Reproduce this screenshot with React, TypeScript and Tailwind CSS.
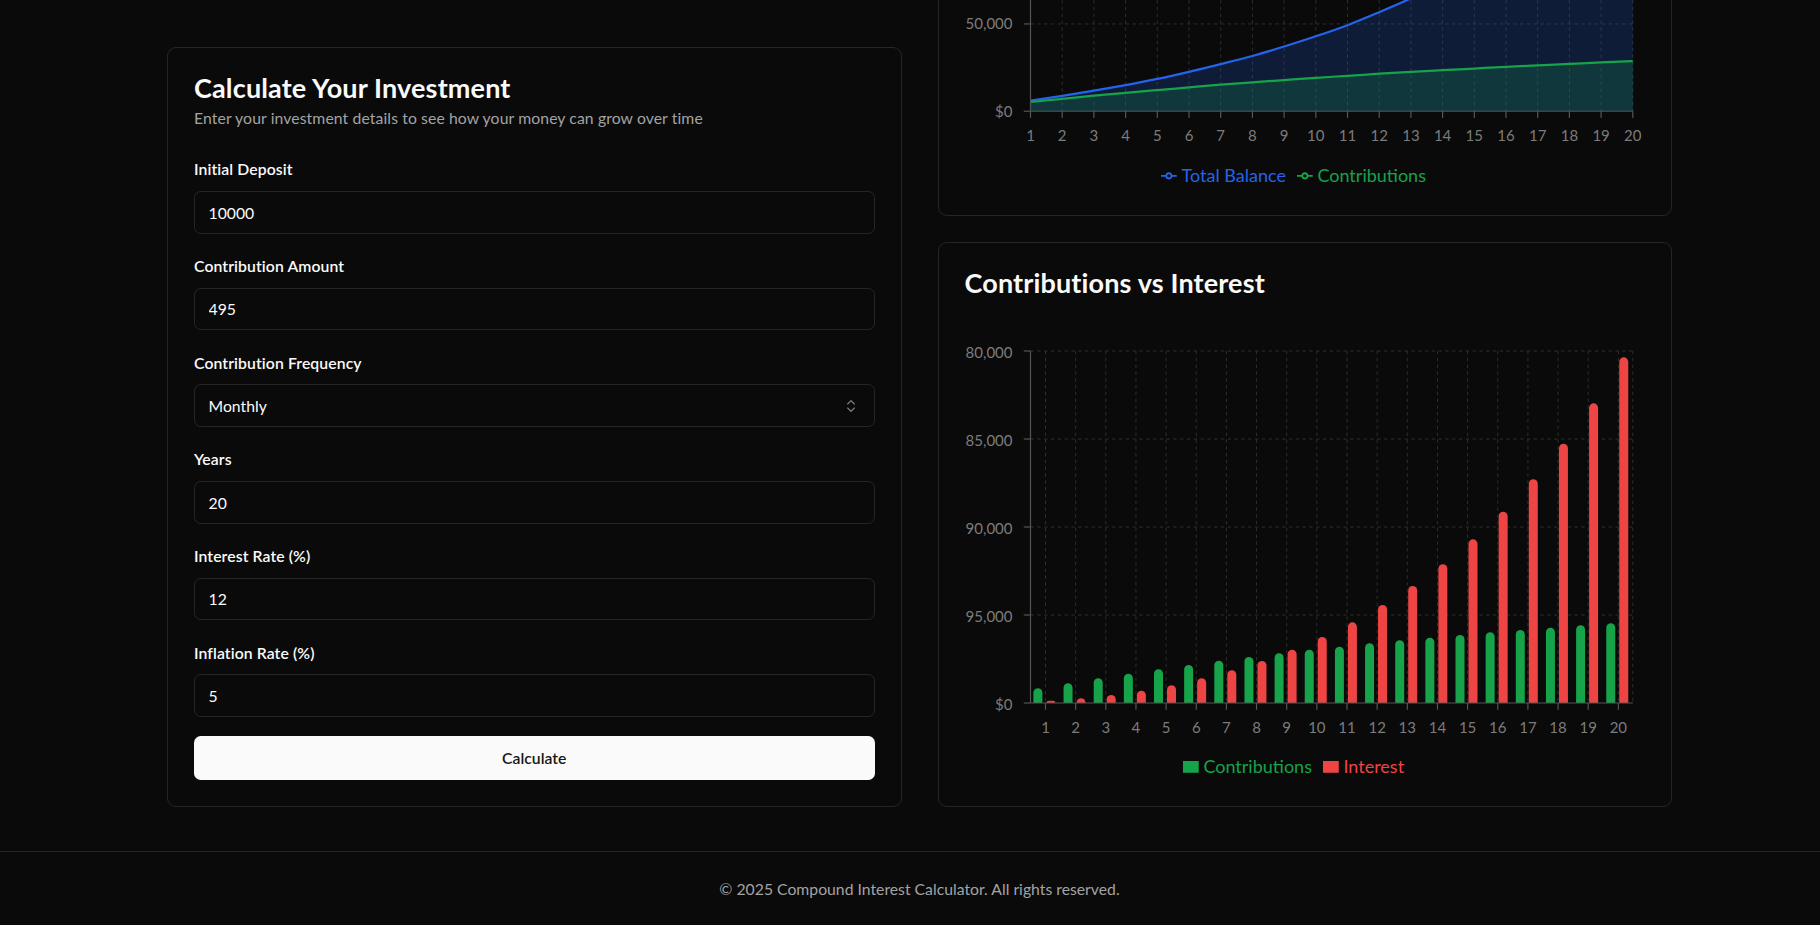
import { ChevronsUpDown } from "lucide-react";

// values read off the reference charts (year 1..20)
const contributions = [
  15870, 21270, 26660, 31630, 36380, 41020, 45660, 49660, 53650, 57540,
  60780, 64450, 67680, 70490, 73410, 76320, 78800, 81290, 83880, 86040,
];
const interest = [
  2480, 5070, 8640, 13280, 19110, 26660, 35300, 45340, 57540, 71250,
  87110, 105790, 126300, 149730, 176710, 206510, 241490, 279910, 323530, 373180,
];
const totals = contributions.map((c, i) => c + interest[i]);
const years = contributions.map((_, i) => i + 1);

const GRID = "#2e2e2e";
const AXIS = "#555555";
const TICK = "#7c7c7c";
const BLUE = "#2563eb";
const GREEN = "#16a34a";
const RED = "#ef4444";

// monotone-x curve, same idea as d3/recharts "monotone"
function monotonePath(pts: [number, number][]) {
  const n = pts.length;
  const h: number[] = [];
  const s: number[] = [];
  for (let i = 0; i < n - 1; i++) {
    h[i] = pts[i + 1][0] - pts[i][0];
    s[i] = (pts[i + 1][1] - pts[i][1]) / h[i];
  }
  const m: number[] = new Array(n).fill(0);
  for (let i = 1; i < n - 1; i++) {
    const p = (s[i - 1] * h[i] + s[i] * h[i - 1]) / (h[i - 1] + h[i]);
    m[i] =
      (Math.sign(s[i - 1]) + Math.sign(s[i])) *
        Math.min(Math.abs(s[i - 1]), Math.abs(s[i]), 0.5 * Math.abs(p)) || 0;
  }
  m[0] = (3 * s[0] - m[1]) / 2;
  m[n - 1] = (3 * s[n - 2] - m[n - 2]) / 2;
  let d = `M${pts[0][0]},${pts[0][1]}`;
  for (let i = 0; i < n - 1; i++) {
    const [x0, y0] = pts[i];
    const [x1, y1] = pts[i + 1];
    const t = h[i] / 3;
    d += `C${x0 + t},${y0 + m[i] * t},${x1 - t},${y1 - m[i + 1] * t},${x1},${y1}`;
  }
  return d;
}

function Field({ label, value }: { label: string; value: string }) {
  return (
    <div>
      <label className="block h-[22px] text-[15.75px] font-semibold leading-[22px] tracking-[0.1px] text-[#fafafa]">
        {label}
      </label>
      <input
        defaultValue={value}
        className="mt-[10.7px] block h-[42.7px] w-full rounded-[6.75px] border border-[#262626] bg-transparent px-[13.5px] text-[15.75px] text-[#fafafa] outline-none"
      />
    </div>
  );
}

function SelectField({ label, value }: { label: string; value: string }) {
  return (
    <div>
      <label className="block h-[22px] text-[15.75px] font-semibold leading-[22px] tracking-[0.1px] text-[#fafafa]">
        {label}
      </label>
      <div className="mt-[10.7px] flex h-[42.7px] w-full items-center justify-between rounded-[6.75px] border border-[#262626] pl-[13.5px] pr-[14.5px] text-[15.75px] text-[#fafafa]">
        <span>{value}</span>
        <ChevronsUpDown className="h-[16px] w-[16px] opacity-50" strokeWidth={1.75} />
      </div>
    </div>
  );
}

type LegendItem = { label: string; color: string; kind: "line" | "rect" };

function Legend({ items }: { items: LegendItem[] }) {
  return (
    <div className="flex h-[25.5px] items-center justify-center pr-[11px]">
      {items.map((it) => (
        <div key={it.label} className="mr-[11.25px] flex items-center">
          <svg width="15.75" height="15.75" viewBox="0 0 32 32" className="mr-[4.5px]">
            {it.kind === "line" ? (
              <path
                strokeWidth={4}
                fill="none"
                stroke={it.color}
                d="M0,16h10.67A5.33,5.33,0,1,1,21.33,16H32M21.33,16A5.33,5.33,0,1,1,10.67,16"
              />
            ) : (
              <path fill={it.color} d="M0,4h32v24h-32z" />
            )}
          </svg>
          <span className="text-[18px] leading-[25px]" style={{ color: it.color }}>
            {it.label}
          </span>
        </div>
      ))}
    </div>
  );
}

function GrowthChart() {
  const base = 110.5;
  const step = 87.3; // px per 150,000
  const x = (i: number) => 1030 + i * 31.7;
  const y = (v: number) => base - (v * step) / 150000;
  const top = base - 4 * step;
  const right = x(19);
  const totalPts = totals.map((v, i) => [x(i), y(v)] as [number, number]);
  const contribPts = contributions.map((v, i) => [x(i), y(v)] as [number, number]);
  const totalLine = monotonePath(totalPts);
  const contribLine = monotonePath(contribPts);
  const close = `L${right},${base}L${x(0)},${base}Z`;
  const yTicks = ["$0", "50,000"];

  return (
    <svg
      width="680.5"
      height="431"
      viewBox="964.5 -268.75 680.5 431"
      className="block overflow-hidden"
    >
      {[1, 2, 3, 4].map((k) => (
        <line key={k} x1={1030} x2={right} y1={base - k * step} y2={base - k * step} stroke={GRID} strokeDasharray="3.4 3.4" />
      ))}
      {years.map((_, i) => (
        <line key={i} x1={x(i)} x2={x(i)} y1={top} y2={base} stroke={GRID} strokeDasharray="3.4 3.4" />
      ))}
      <path d={totalLine + close} fill={BLUE} fillOpacity={0.2} />
      <path d={contribLine + close} fill={GREEN} fillOpacity={0.2} />
      <path d={totalLine} fill="none" stroke={BLUE} strokeWidth={2.25} />
      <path d={contribLine} fill="none" stroke={GREEN} strokeWidth={2.25} />

      <line x1={1030} x2={right} y1={base} y2={base} stroke={AXIS} strokeWidth={1.2} />
      <line x1={1030} x2={1030} y1={top} y2={base} stroke={AXIS} strokeWidth={1.2} />
      {years.map((yr, i) => (
        <g key={yr}>
          <line x1={x(i)} x2={x(i)} y1={base} y2={base + 6.75} stroke={AXIS} strokeWidth={1.2} />
          <text x={x(i)} y={134.3} textAnchor="middle" dominantBaseline="central" fontSize={15} fill={TICK}>
            {yr}
          </text>
        </g>
      ))}
      {[0, 1, 2, 3, 4].map((k) => (
        <line key={k} x1={1023.25} x2={1030} y1={base - k * step} y2={base - k * step} stroke={AXIS} strokeWidth={1.2} />
      ))}
      {yTicks.map((t, k) => (
        <text key={k} x={1012} y={base - k * step - 0.5} textAnchor="end" dominantBaseline="central" fontSize={15} fill={TICK}>
          {t}
        </text>
      ))}
    </svg>
  );
}

function BarPath({ x, w, top, base, color }: { x: number; w: number; top: number; base: number; color: string }) {
  const r = Math.min(w / 2, base - top);
  const d = `M${x},${base}V${top + r}A${r},${r} 0 0 1 ${x + r},${top}H${x + w - r}A${r},${r} 0 0 1 ${x + w},${top + r}V${base}Z`;
  return <path d={d} fill={color} />;
}

function SplitChart() {
  const base = 703;
  const c = (i: number) => 1045 + i * 30.15;
  const y = (v: number) => base - (v * 352) / 380000;
  const right = 1632.3;
  const rows = [
    { y: 351, t: "80,000" },
    { y: 439, t: "85,000" },
    { y: 527, t: "90,000" },
    { y: 615, t: "95,000" },
    { y: 703, t: "$0" },
  ];

  return (
    <svg width="680.5" height="431" viewBox="964.5 323 680.5 431" className="block overflow-hidden">
      {rows.slice(0, 4).map((r) => (
        <line key={r.y} x1={1030} x2={right} y1={r.y} y2={r.y} stroke={GRID} strokeDasharray="3.4 3.4" />
      ))}
      {years.map((_, i) => (
        <line key={i} x1={c(i)} x2={c(i)} y1={351} y2={base} stroke={GRID} strokeDasharray="3.4 3.4" />
      ))}
      <line x1={right} x2={right} y1={351} y2={base} stroke={GRID} strokeDasharray="3.4 3.4" />

      {years.map((yr, i) => (
        <g key={yr}>
          <BarPath x={c(i) - 12.1} w={9} top={y(contributions[i])} base={base} color={GREEN} />
          <BarPath x={c(i) + 0.9} w={9} top={y(interest[i])} base={base} color={RED} />
        </g>
      ))}

      <line x1={1030} x2={right} y1={base} y2={base} stroke={AXIS} strokeWidth={1.2} />
      <line x1={1030} x2={1030} y1={351} y2={base} stroke={AXIS} strokeWidth={1.2} />
      {years.map((yr, i) => (
        <g key={yr}>
          <line x1={c(i)} x2={c(i)} y1={base} y2={base + 6.75} stroke={AXIS} strokeWidth={1.2} />
          <text x={c(i)} y={727.3} textAnchor="middle" dominantBaseline="central" fontSize={15} fill={TICK}>
            {yr}
          </text>
        </g>
      ))}
      {rows.map((r) => (
        <g key={r.t}>
          <line x1={1023.25} x2={1030} y1={r.y} y2={r.y} stroke={AXIS} strokeWidth={1.2} />
          <text x={1012} y={r.y + 0.5} textAnchor="end" dominantBaseline="central" fontSize={15} fill={TICK}>
            {r.t}
          </text>
        </g>
      ))}
    </svg>
  );
}

export default function App() {
  return (
    <div className="flex h-[925px] flex-col justify-end overflow-hidden bg-[#0a0a0a] font-['Lato',sans-serif] text-[#fafafa]">
      <main className="shrink-0 pb-[44.4px]">
        <div className="ml-[167px] grid w-[1505px] grid-cols-2 items-end gap-x-[36px]">
          {/* Calculator form */}
          <div className="rounded-[9px] border border-[#262626] bg-[#0a0a0a] p-[26px]">
            <h2 className="text-[27px] font-bold leading-[27px] tracking-[0.15px]">Calculate Your Investment</h2>
            <p className="mt-[5.75px] text-[15.75px] leading-[22.5px] tracking-[0.1px] text-[#a3a3a3]">
              Enter your investment details to see how your money can grow over time
            </p>
            <div className="mt-[29px] flex flex-col gap-[21.3px]">
              <Field label="Initial Deposit" value="10000" />
              <Field label="Contribution Amount" value="495" />
              <SelectField label="Contribution Frequency" value="Monthly" />
              <Field label="Years" value="20" />
              <Field label="Interest Rate (%)" value="12" />
              <Field label="Inflation Rate (%)" value="5" />
            </div>
            <button className="mt-[18.7px] h-[44px] w-full rounded-[6.75px] bg-[#fafafa] text-[15.75px] font-semibold text-[#171717]">
              Calculate
            </button>
          </div>

          {/* Charts */}
          <div className="flex flex-col gap-[26.5px]">
            <div className="rounded-[9px] border border-[#262626] bg-[#0a0a0a] px-[26px] pb-[26px]">
              <GrowthChart />
              <Legend
                items={[
                  { label: "Total Balance", color: BLUE, kind: "line" },
                  { label: "Contributions", color: GREEN, kind: "line" },
                ]}
              />
            </div>
            <div className="rounded-[9px] border border-[#262626] bg-[#0a0a0a] p-[26px]">
              <h2 className="text-[27px] font-bold leading-[27px] tracking-[0.15px]">Contributions vs Interest</h2>
              <div className="mt-[27px]">
                <SplitChart />
                <Legend
                  items={[
                    { label: "Contributions", color: GREEN, kind: "rect" },
                    { label: "Interest", color: RED, kind: "rect" },
                  ]}
                />
              </div>
            </div>
          </div>
        </div>
      </main>

      <footer className="flex h-[74px] shrink-0 items-center justify-center border-t border-[#262626] pl-[19px] text-[15.75px] text-[#a3a3a3]">
        © 2025 Compound Interest Calculator. All rights reserved.
      </footer>
    </div>
  );
}
